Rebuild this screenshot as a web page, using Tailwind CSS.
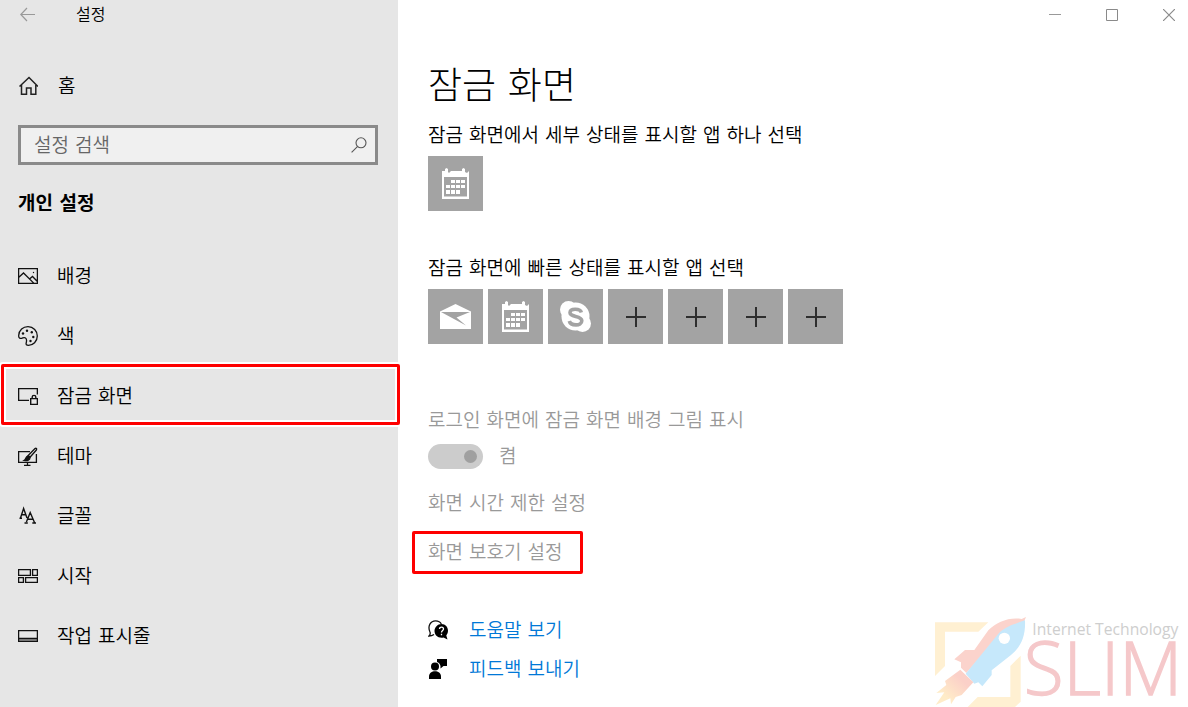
<!DOCTYPE html>
<html lang="ko">
<head>
  <meta charset="UTF-8" />
  <meta name="viewport" content="width=device-width, initial-scale=1.0"/>
  <title>설정</title>
  <script src="https://cdn.jsdelivr.net/npm/@tailwindcss/browser@4"></script>
</head>
<body class="bg-white text-black font-['DejaVu_Sans','Noto_Sans_CJK_KR',sans-serif] font-[350] text-[19px] leading-7">
<div class="flex min-h-screen">

  <!-- Sidebar -->
  <aside class="w-[398px] shrink-0 bg-[#e6e6e6]">
    <header class="flex items-center h-[30px] pl-5 gap-10">
      <button type="button" aria-label="뒤로" class="w-4 h-4">
        <svg class="w-4 h-4" viewBox="0 0 16 16" fill="none" stroke="#999" stroke-width="1.2"><path d="M15 7.5H1M7 1L.8 7.5L7 14"/></svg>
      </button>
      <span class="text-base">설정</span>
    </header>

    <a href="#" class="flex items-center h-10 mt-9 pl-[18px] gap-5">
      <svg class="w-5 h-5" viewBox="0 0 20 20" fill="none" stroke="#222" stroke-width="1.5"><path d="M1.5 10.5L11 1.5L20 10.5M3.5 9V18.3H8.5V12H13V18.3H17.8V9"/></svg>
      <span>홈</span>
    </a>

    <!-- Search -->
    <div class="flex items-center h-10 mt-[19px] ml-[18px] mr-5 border-3 border-[#8a8a8a] bg-[#f0f0f0] pl-[13px] pr-2">
      <input id="search" type="text" aria-label="설정 검색" placeholder="설정 검색" class="grow min-w-0 h-7 outline-none placeholder:text-[#666]" />
      <svg class="w-4 h-4" viewBox="0 0 16 16" fill="none" stroke="#555" stroke-width="1.1"><circle cx="10" cy="5.8" r="5"/><path d="M6.4 9.6L.6 15.4"/></svg>
    </div>

    <h2 class="mt-6 ml-[18px] font-bold">개인 설정</h2>

    <nav class="mt-[29px]">
      <a href="#" class="flex items-center h-15 pl-[18px] gap-[19px]">
        <svg class="w-5 h-5" viewBox="0 0 20 20" fill="none" stroke="#111" stroke-width="1.3"><path d="M.6 2.6H19.4V17.4H.6ZM.6 11.5L5.5 7L16 17.4M11.5 13L14.5 10.5L19.4 15.5"/><circle cx="15.5" cy="6.5" r=".7" fill="#111" stroke="none"/></svg>
        <span>배경</span>
      </a>
      <a href="#" class="flex items-center h-15 pl-[18px] gap-[19px]">
        <svg class="w-5 h-5" viewBox="0 0 20 20" fill="none" stroke="#111" stroke-width="1.3"><path d="M.7 9.5C1 4 5 .7 10 .7C15.5 .7 19.3 5 19.3 10C19.3 15.5 15 19.3 10.5 19.3C8.5 19.3 7.8 18.5 8.2 17C8.7 15 9 13 7.5 12C6 11 5 12 3.8 12.3C2 12.8 .5 12 .7 9.5Z"/><g fill="#111" stroke="none"><circle cx="5" cy="7.5" r="1.2"/><circle cx="9" cy="4.8" r="1.2"/><circle cx="13.8" cy="6.2" r="1.2"/><circle cx="15.3" cy="11" r="1.2"/><circle cx="12.5" cy="15" r="1.2"/></g></svg>
        <span>색</span>
      </a>
      <a href="#" aria-current="page" class="relative flex items-center h-15 pl-[18px] gap-[19px]">
        <svg class="w-5 h-5" viewBox="0 0 20 20" fill="none" stroke="#111" stroke-width="1.4"><path d="M11 14.4H.6V2.6H19.4V8.5M12.7 12.6H19.4V18.4H12.7ZM14.2 12.6V11C14.2 8.8 17.8 8.8 17.8 11V12.6"/></svg>
        <span>잠금 화면</span>
        <span class="absolute z-10 -top-0.5 bottom-px left-px -right-0.5 border-3 border-[#fe0000] rounded-xs shadow-[0_0_0_2px_#fff,inset_0_0_0_2px_#fff]"></span>
      </a>
      <a href="#" class="flex items-center h-15 pl-[18px] gap-[19px]">
        <svg class="w-5 h-5" viewBox="0 0 20 20" fill="none" stroke="#111" stroke-width="1.3"><path d="M12 5.6H.6V16.4H18.4V8M9.5 16.4V19M6 19.4H12.5"/><path d="M10.2 9.5L17 2.6C18.2 1.8 19.2 2.8 18.4 4L12 11.3Z"/><path d="M10 9.8L12 11.5C12 14 9.5 15 6.2 14.4C8 13.5 7.5 10.5 10 9.8Z" fill="#111"/></svg>
        <span>테마</span>
      </a>
      <a href="#" class="flex items-center h-15 pl-[18px] gap-[19px]">
        <svg class="w-5 h-5" viewBox="0 0 20 20" fill="none" stroke="#111" stroke-width="1.4"><path d="M2.5 12L5.6 2.5L9 12M3.5 8.8H7.6M1.5 12.2H4M8.4 16L12.2 6.5L16.5 16.5M9.3 13.2H15M6.5 17H9.8M14.3 17H18"/></svg>
        <span>글꼴</span>
      </a>
      <a href="#" class="flex items-center h-15 pl-[18px] gap-[19px]">
        <svg class="w-5 h-5" viewBox="0 0 20 20" fill="none" stroke="#111" stroke-width="1.3"><path d="M.6 3.6H12.4V9.4H.6ZM14.6 3.6H19.4V9.4H14.6ZM.6 11.6H5.4V16.4H.6ZM7.6 11.6H19.4V16.4H7.6Z"/></svg>
        <span>시작</span>
      </a>
      <a href="#" class="flex items-center h-15 pl-[18px] gap-[19px]">
        <svg class="w-5 h-5" viewBox="0 0 20 20" fill="none" stroke="#111" stroke-width="1.3"><path d="M1 12.5H19V15H1Z" fill="#999" stroke="none"/><path d="M.6 4.6H19.4V15.4H.6ZM.6 12.5H19.4"/></svg>
        <span>작업 표시줄</span>
      </a>
    </nav>
  </aside>

  <!-- Content -->
  <main class="relative grow">
    <header class="flex items-center justify-end h-[30px] gap-[45px] pr-[13px]">
      <button type="button" aria-label="최소화" class="w-3 h-3"><svg class="w-3 h-3" viewBox="0 0 12 12" stroke="#999"><path d="M0 5.5H12"/></svg></button>
      <button type="button" aria-label="최대화" class="w-3 h-3"><svg class="w-3 h-3" viewBox="0 0 12 12" fill="none" stroke="#8a8a8a"><path d="M.5 .5H11.5V11.5H.5Z"/></svg></button>
      <button type="button" aria-label="닫기" class="w-3 h-3"><svg class="w-3 h-3" viewBox="0 0 12 12" stroke="#8a8a8a" stroke-width="1.2"><path d="M0 0L12 12M12 0L0 12"/></svg></button>
    </header>

    <div class="pl-[30px]">
      <h1 class="mt-[33px] text-[37px] leading-12 font-light">잠금 화면</h1>

      <h2 class="mt-2.5">잠금 화면에서 세부 상태를 표시할 앱 하나 선택</h2>
      <button type="button" aria-label="일정" class="flex items-center justify-center mt-[7px] w-[55px] h-[55px] bg-[#a3a3a3]">
        <svg class="w-7 h-8" viewBox="0 0 28 32" fill="#fff"><path fill-rule="evenodd" d="M0 3H3V1L4.5 0L6 1V4L7 5L9 3H20V1L21.5 0L23 1V4L25 5L27 3V31H0ZM2 9V28.5H25V9Z"/><path d="M9 12h4v3h-4zM14 12h4v3h-4zM19 12h4v3h-4zM4 17h4v3H4zM9 17h4v3H9zM14 17h4v3h-4zM19 17h4v3h-4zM4 22h4v4H4zM9 22h4v4H9zM14 22h4v4h-4z"/></svg>
      </button>

      <h2 class="mt-[43px]">잠금 화면에 빠른 상태를 표시할 앱 선택</h2>
      <div class="flex gap-[5px] mt-[7px]">
        <button type="button" aria-label="메일" class="flex items-center justify-center w-[55px] h-[55px] bg-[#a3a3a3]">
          <svg class="w-8 h-7" viewBox="0 0 32 28" fill="#fff"><path d="M0 8.5L15.5 1L31 8.5V26H0Z"/><path d="M1 9H30L16.5 14.5L26 22.5Z" fill="#a3a3a3"/></svg>
        </button>
        <button type="button" aria-label="일정" class="flex items-center justify-center w-[55px] h-[55px] bg-[#a3a3a3]">
          <svg class="w-7 h-8" viewBox="0 0 28 32" fill="#fff"><path fill-rule="evenodd" d="M0 3H3V1L4.5 0L6 1V4L7 5L9 3H20V1L21.5 0L23 1V4L25 5L27 3V31H0ZM2 9V28.5H25V9Z"/><path d="M9 12h4v3h-4zM14 12h4v3h-4zM19 12h4v3h-4zM4 17h4v3H4zM9 17h4v3H9zM14 17h4v3h-4zM19 17h4v3h-4zM4 22h4v4H4zM9 22h4v4H9zM14 22h4v4h-4z"/></svg>
        </button>
        <button type="button" aria-label="Skype" class="flex items-center justify-center w-[55px] h-[55px] bg-[#a3a3a3]">
          <svg class="w-8 h-8" viewBox="0 0 32 32"><g fill="#fff"><circle cx="15.5" cy="15.5" r="14"/><circle cx="8.5" cy="8.5" r="8.500"/><circle cx="22.5" cy="22.5" r="8.500"/></g><path d="M21.3 11.500C20.300 7.500 10.300 7 10 11.500C9.800 16.800 21.800 14 21.800 19.800C21.800 25.500 10.500 25 9.300 20" fill="none" stroke="#a3a3a3" stroke-width="3.600"/></svg>
        </button>
        <button type="button" aria-label="앱 추가" class="flex items-center justify-center w-[55px] h-[55px] bg-[#a3a3a3]">
          <svg class="w-5 h-5" viewBox="0 0 20 20" stroke="#2e2e2e" stroke-width="2"><path d="M0 10H20M10 0V20"/></svg>
        </button>
        <button type="button" aria-label="앱 추가" class="flex items-center justify-center w-[55px] h-[55px] bg-[#a3a3a3]">
          <svg class="w-5 h-5" viewBox="0 0 20 20" stroke="#2e2e2e" stroke-width="2"><path d="M0 10H20M10 0V20"/></svg>
        </button>
        <button type="button" aria-label="앱 추가" class="flex items-center justify-center w-[55px] h-[55px] bg-[#a3a3a3]">
          <svg class="w-5 h-5" viewBox="0 0 20 20" stroke="#2e2e2e" stroke-width="2"><path d="M0 10H20M10 0V20"/></svg>
        </button>
        <button type="button" aria-label="앱 추가" class="flex items-center justify-center w-[55px] h-[55px] bg-[#a3a3a3]">
          <svg class="w-5 h-5" viewBox="0 0 20 20" stroke="#2e2e2e" stroke-width="2"><path d="M0 10H20M10 0V20"/></svg>
        </button>
      </div>

      <div class="text-[#999]">
        <label for="signin-picture" class="block mt-[62px]">로그인 화면에 잠금 화면 배경 그림 표시</label>
        <div class="flex items-center gap-4 mt-2">
          <input id="signin-picture" type="checkbox" role="switch" checked disabled class="appearance-none flex items-center justify-end w-[55px] h-[25px] pr-1.5 rounded-full bg-[#cccccc] before:content-[''] before:w-[13px] before:h-[13px] before:rounded-full before:bg-[#a0a0a0]" />
          <span>켬</span>
        </div>
        <a href="#" class="block w-fit mt-[19px]">화면 시간 제한 설정</a>
        <a href="#" class="block w-fit mt-3.5 -ml-4 pl-[13px] pr-[18px] pt-1 pb-[5px] border-3 border-[#fe0000] rounded-xs">화면 보호기 설정</a>
      </div>

      <div class="flex flex-col gap-[11px] mt-[42px] text-[#0078d7]">
        <a href="#" class="flex items-center gap-[21px]">
          <svg class="w-5 h-5" viewBox="0 0 20 20"><path d="M6 14.500C4.500 15.500 3 16 1 16C2.500 14.500 2.500 13 1.800 11.500C-.5 6 2.500 .8 7.500 .8C10.500 .8 12.500 2.200 13.300 4" fill="none" stroke="#111" stroke-width="1.300"/><path d="M13.500 4C17.500 4 20 7 20 10.800C20 13 19 14.500 18.300 15.500L19.500 19.500L15.500 17.500C10 18.500 6.500 15 6.500 11C6.500 7.500 9.500 4 13.500 4Z" fill="#000"/><path d="M11.500 9C11.500 6.500 15.500 6.700 15.500 9C15.500 10.500 13.500 10.700 13.500 12.500M13.500 13.800V15.200" fill="none" stroke="#fff" stroke-width="1.300"/></svg>
          <span>도움말 보기</span>
        </a>
        <a href="#" class="flex items-center gap-[21px]">
          <svg class="w-5 h-5" viewBox="0 0 20 20" fill="#000"><path d="M9 0H19V7H15.500L12.500 9.500V7C12 4.500 10.500 3.500 9 3Z"/><circle cx="7" cy="7.500" r="4"/><path d="M1 20V17.500C1 10.500 13 10.500 13 17.500V20Z"/></svg>
          <span>피드백 보내기</span>
        </a>
      </div>
    </div>

    <!-- Watermark -->
    <svg class="absolute right-0 bottom-0 w-[263px] h-[102px] pointer-events-none" viewBox="0 0 789 306" role="img" aria-label="Internet Technology SLIM">
      <defs>
        <linearGradient id="flame" x1="1" y1="0" x2="0" y2="1"><stop offset=".3" stop-color="#fbd0c8"/><stop offset=".75" stop-color="#ffecc8"/></linearGradient>
      </defs>
      <path d="M30 52H190L160 80H60V183L30 213ZM287 152V290L270 306H128L158 276H256V183Z" fill="#fff0d2"/>
      <path d="M303 36L290 42C250 36 215 52 190 76L148 135H120L88 163L108 172V188L124 204L230 84L298 48Z" fill="#fbd3cc"/>
      <path d="M122 206L222 84C245 62 272 56 300 46C302 90 290 124 258 150L200 196V210L172 244L160 232L148 236Z" fill="#c6e8fb"/>
      <circle cx="238" cy="100" r="17" fill="#fff"/>
      <path d="M106 194L145 232L110 270L92 276L78 298L76 280L32 300L58 262L34 264L64 240L60 228Z" fill="url(#flame)"/>
      <text x="322" y="91" font-size="47" fill="#cecece" class="font-['Open_Sans',sans-serif] font-normal">Internet Technology</text>
      <text x="296" y="271" font-size="219" fill="#f5c8ca" stroke="#f5c8ca" stroke-width="4" class="font-['Open_Sans',sans-serif] font-light">SLIM</text>
    </svg>
  </main>
</div>
</body>
</html>
